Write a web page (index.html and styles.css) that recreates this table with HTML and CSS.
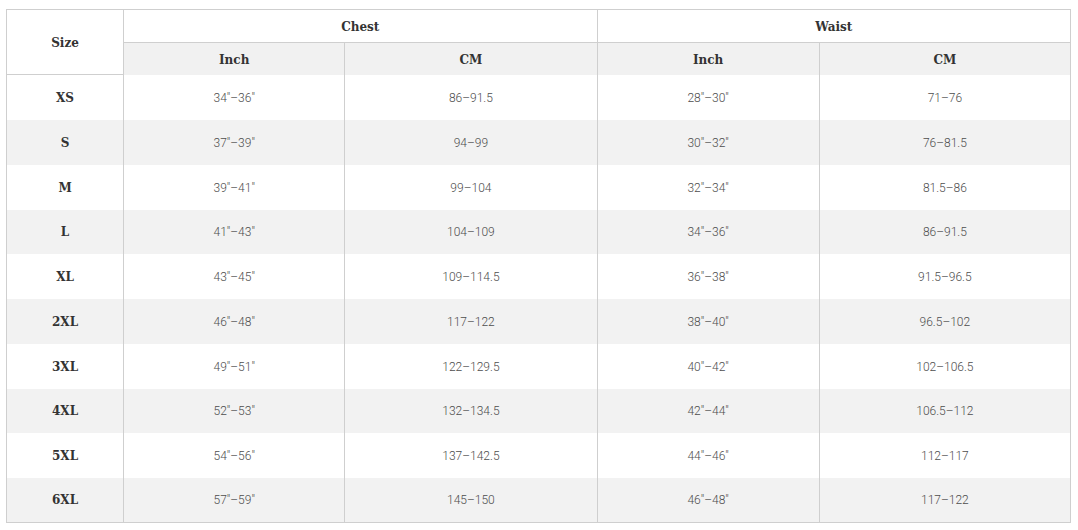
FILE: index.html
```html
<!DOCTYPE html>
<html>
<head>
<meta charset="utf-8">
<link rel="stylesheet" href="styles.css">
</head>
<body>
<div class="wrap">
<table class="size-table">
  <colgroup>
    <col class="c-size"><col class="c-ci"><col class="c-cc"><col class="c-wi"><col class="c-wc">
  </colgroup>
  <thead>
    <tr class="h1">
      <th rowspan="2" class="size-head">Size</th>
      <th colspan="2" class="group">Chest</th>
      <th colspan="2" class="group">Waist</th>
    </tr>
    <tr class="h2">
      <th>Inch</th><th>CM</th><th>Inch</th><th>CM</th>
    </tr>
  </thead>
  <tbody>
    <tr><th>XS</th><td>34"–36"</td><td>86–91.5</td><td>28"–30"</td><td>71–76</td></tr>
    <tr><th>S</th><td>37"–39"</td><td>94–99</td><td>30"–32"</td><td>76–81.5</td></tr>
    <tr><th>M</th><td>39"–41"</td><td>99–104</td><td>32"–34"</td><td>81.5–86</td></tr>
    <tr class="short"><th>L</th><td>41"–43"</td><td>104–109</td><td>34"–36"</td><td>86–91.5</td></tr>
    <tr><th>XL</th><td>43"–45"</td><td>109–114.5</td><td>36"–38"</td><td>91.5–96.5</td></tr>
    <tr><th>2XL</th><td>46"–48"</td><td>117–122</td><td>38"–40"</td><td>96.5–102</td></tr>
    <tr><th>3XL</th><td>49"–51"</td><td>122–129.5</td><td>40"–42"</td><td>102–106.5</td></tr>
    <tr class="short"><th>4XL</th><td>52"–53"</td><td>132–134.5</td><td>42"–44"</td><td>106.5–112</td></tr>
    <tr><th>5XL</th><td>54"–56"</td><td>137–142.5</td><td>44"–46"</td><td>112–117</td></tr>
    <tr><th>6XL</th><td>57"–59"</td><td>145–150</td><td>46"–48"</td><td>117–122</td></tr>
  </tbody>
</table>
</div>
</body>
</html>
```
FILE: styles.css
```css
html, body {
  margin: 0;
  padding: 0;
  background: #fff;
}
.wrap {
  padding: 9px 7px 0 6px;
}
.size-table {
  border-collapse: collapse;
  width: 1065px;
  table-layout: fixed;
  font-family: Roboto, "Liberation Sans", sans-serif;
  border: 1px solid #cfcfcf;
}
.c-size { width: 117px; }
.c-ci { width: 221px; }
.c-cc { width: 252px; }
.c-wi { width: 222px; }
.c-wc { width: 251px; }
th, td {
  padding: 0;
  text-align: center;
  vertical-align: middle;
}
th {
  font-family: "DejaVu Serif", serif;
  font-weight: bold;
  font-size: 12px;
  color: #333;
}
td {
  font-weight: 300;
  font-size: 12px;
  color: #4d4d4d;
  padding-top: 1px;
}
thead th { padding-top: 2px; }
.h1 { height: 33px; }
.h1 th { background: #fff; }
.h1 .group { border-left: 1px solid #cfcfcf; border-bottom: 1px solid #cfcfcf; }
.size-head { border-bottom: 1px solid #cfcfcf; }
.h2 { height: 32px; background: #f1f1f1; }
.h2 th { border-left: 1px solid #cfcfcf; }
tbody tr { height: 45px; }
tbody tr.short { height: 44px; }
tbody tr:nth-child(even) { background: #f2f2f2; }
tbody td { border-left: 1px solid #cfcfcf; }
tbody th { padding-top: 1px; }
```
